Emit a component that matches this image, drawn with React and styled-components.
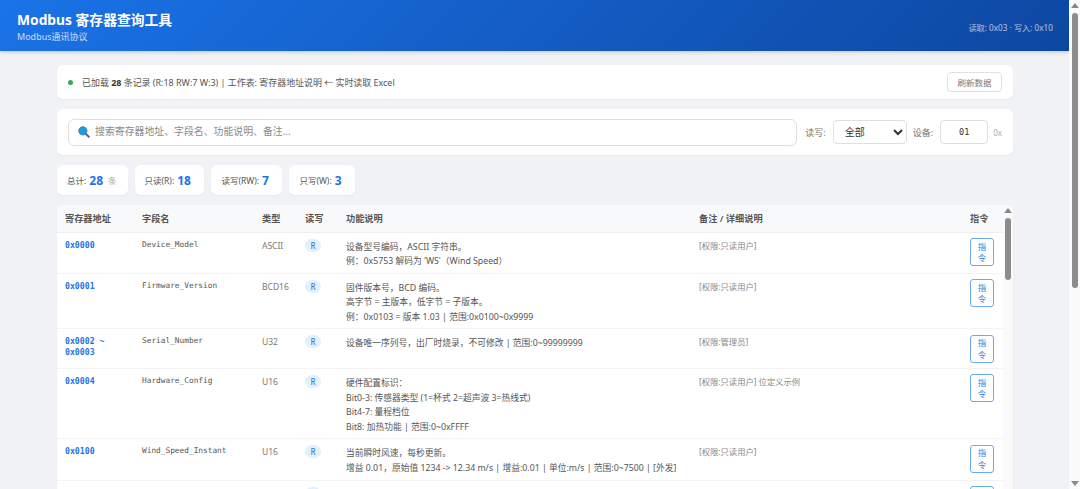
import React from 'react';
import styled, { createGlobalStyle } from 'styled-components';

const SANS = '"Noto Sans", "Noto Sans CJK SC", sans-serif';
const MONO = '"DejaVu Sans Mono", "Noto Sans CJK SC", monospace';

const ROWS = [
  {
    addr: ['0x0000'],
    field: 'Device_Model',
    type: 'ASCII',
    desc: ['设备型号编码，ASCII 字符串。', "例：0x5753 解码为 'WS'（Wind Speed）"],
    note: '[权限:只读用户]',
  },
  {
    addr: ['0x0001'],
    field: 'Firmware_Version',
    type: 'BCD16',
    desc: ['固件版本号，BCD 编码。', '高字节 = 主版本，低字节 = 子版本。', '例：0x0103 = 版本 1.03 | 范围:0x0100~0x9999'],
    note: '[权限:只读用户]',
  },
  {
    addr: ['0x0002 ~', '0x0003'],
    field: 'Serial_Number',
    type: 'U32',
    desc: ['设备唯一序列号，出厂时烧录，不可修改 | 范围:0~99999999'],
    note: '[权限:管理员]',
  },
  {
    addr: ['0x0004'],
    field: 'Hardware_Config',
    type: 'U16',
    desc: ['硬件配置标识：', 'Bit0-3: 传感器类型 (1=杯式 2=超声波 3=热线式)', 'Bit4-7: 量程档位', 'Bit8: 加热功能 | 范围:0~0xFFFF'],
    note: '[权限:只读用户] 位定义示例',
  },
  {
    addr: ['0x0100'],
    field: 'Wind_Speed_Instant',
    type: 'U16',
    desc: ['当前瞬时风速，每秒更新。', '增益 0.01，原始值 1234 -> 12.34 m/s | 增益:0.01 | 单位:m/s | 范围:0~7500 | [外发]'],
    note: '[权限:只读用户]',
  },
  {
    addr: ['0x0101'],
    field: 'Wind_Speed_Average',
    type: 'U16',
    desc: ['平均风速，按设定周期统计。'],
    note: '[权限:只读用户]',
  },
];

const GlobalStyle = createGlobalStyle`
  html,
  body {
    margin: 0;
    height: 100%;
    overflow: hidden;
  }

  body {
    background: #f0f2f5;
    font-family: ${SANS};
    color: #333333;
  }
`;

const Window = styled.div`
  height: 100vh;
  display: flex;
  overflow: hidden;
`;

const Page = styled.div`
  flex: 1;
  min-width: 0;
  overflow: hidden;
`;

const Scrollbar = styled.div`
  flex: none;
  width: ${(p) => p.$width}px;
  box-sizing: border-box;
  display: flex;
  flex-direction: column;
  align-items: center;
  background: #fafafa;
`;

const ArrowUp = styled.span`
  flex: none;
  margin: 3px 0 5px;
  width: 0;
  height: 0;
  border-left: 4px solid transparent;
  border-right: 4px solid transparent;
  border-bottom: 5px solid #8a8a8a;
`;

const ArrowDown = styled.span`
  flex: none;
  margin-top: auto;
  margin-bottom: 3px;
  width: 0;
  height: 0;
  border-left: 4px solid transparent;
  border-right: 4px solid transparent;
  border-top: 5px solid #8a8a8a;
`;

const Thumb = styled.span`
  flex: none;
  width: 6px;
  height: ${(p) => p.$height}px;
  border-radius: 3px;
  background: #8c8c8c;
`;

const Header = styled.header`
  height: 51px;
  box-sizing: border-box;
  padding: 2px 16px 0 17px;
  display: flex;
  justify-content: space-between;
  align-items: center;
  background: linear-gradient(135deg, #1a73e8, #0d47a1);
  box-shadow: 0 1px 4px rgba(0, 0, 0, 0.2);
  color: #ffffff;
`;

const Title = styled.h1`
  margin: 0;
  font-size: 13.8px;
  line-height: 19px;
  font-weight: 700;
`;

const Subtitle = styled.div`
  margin-top: 1px;
  font-size: 9px;
  line-height: 13px;
  opacity: 0.75;
`;

const HeaderInfo = styled.div`
  font-size: 8.2px;
  opacity: 0.65;
`;

const Main = styled.main`
  padding: 14px 56px 18px 57px;
  display: flex;
  flex-direction: column;
`;

const Card = styled.section`
  background: #ffffff;
  border-radius: 6px;
  box-shadow: 0 1px 2px rgba(0, 0, 0, 0.04);
`;

const StatusBar = styled(Card)`
  height: 34px;
  box-sizing: border-box;
  padding: 0 11px;
  display: flex;
  align-items: center;
  gap: 9px;
  font-size: 8.95px;
  color: #555555;
`;

const Dot = styled.span`
  width: 5px;
  height: 5px;
  border-radius: 50%;
  background: #34a853;
`;

const StatusText = styled.span`
  flex: 1;

  b {
    color: #333333;
  }
`;

const RefreshButton = styled.button`
  width: 55px;
  height: 20px;
  padding: 0;
  background: #ffffff;
  border: 1px solid #e0e0e0;
  border-radius: 4px;
  font-family: ${SANS};
  font-size: 8.5px;
  color: #777777;
`;

const SearchBar = styled(Card)`
  margin-top: 10px;
  height: 46px;
  box-sizing: border-box;
  padding: 0 11px;
  display: flex;
  align-items: center;
`;

const SearchBox = styled.label`
  flex: 1;
  height: 27px;
  box-sizing: border-box;
  padding: 0 9px;
  display: flex;
  align-items: center;
  gap: 5px;
  border: 1px solid #e0e0e0;
  border-radius: 6px;
`;

const SearchIcon = styled.svg`
  width: 12px;
  height: 12px;
  flex: none;
`;

const SearchInput = styled.input`
  flex: 1;
  min-width: 0;
  border: 0;
  outline: 0;
  padding: 0 0 2px;
  font-family: ${SANS};
  font-size: 9.9px;

  &::placeholder {
    color: #8a8a8a;
    opacity: 1;
  }
`;

const FilterLabel = styled.span`
  font-size: 9px;
  color: #777777;
  margin: 0 7px 0 ${(p) => p.$gap}px;
`;

const FilterSelect = styled.select`
  width: 74px;
  height: 24px;
  box-sizing: border-box;
  padding: 0 0 0 7px;
  background: #ffffff;
  border: 1px solid #e0e0e0;
  border-radius: 4px;
  font-family: ${SANS};
  font-size: 10px;
  color: #333333;
`;

const DeviceInput = styled.input`
  width: 48px;
  height: 24px;
  box-sizing: border-box;
  padding: 0;
  text-align: center;
  background: #ffffff;
  border: 1px solid #e0e0e0;
  border-radius: 4px;
  font-family: ${MONO};
  font-size: 8.5px;
  color: #333333;
`;

const HexHint = styled.span`
  margin-left: 5px;
  font-size: 8px;
  color: #aaaaaa;
`;

const Stats = styled.div`
  margin-top: 10px;
  display: flex;
  gap: 7px;
`;

const Stat = styled(Card)`
  height: 30px;
  box-sizing: border-box;
  padding: 0 ${(p) => p.$end}px 0 10px;
  display: flex;
  align-items: center;
  gap: 3px;
  font-size: 8.5px;
  color: #555555;
`;

const StatValue = styled.b`
  font-size: 12px;
  color: #1a73e8;
`;

const StatUnit = styled.span`
  margin-left: 2px;
  color: #aaaaaa;
`;

const TableCard = styled(Card)`
  margin-top: 10px;
  height: 600px;
  display: flex;
  overflow: hidden;
`;

const Table = styled.table`
  flex: 1;
  align-self: flex-start;
  min-width: 0;
  border-collapse: collapse;
  table-layout: fixed;
`;

const HeadCell = styled.th`
  width: ${(p) => p.$width}px;
  height: 27px;
  padding: 0 8px;
  box-sizing: border-box;
  text-align: left;
  background: #f8f9fa;
  border-bottom: 1px solid #eeeeee;
  font-size: 9.2px;
  font-weight: 600;
  color: #555555;
`;

const Row = styled.tr`
  border-bottom: 1px solid #f3f3f3;
`;

const Cell = styled.td`
  padding: 5.5px 8px 5px;
  box-sizing: border-box;
  vertical-align: top;
  font-size: 8.5px;
  color: #777777;
`;

const TypeCell = styled(Cell)`
  padding-top: 7px;
`;

const BadgeCell = styled(Cell)`
  padding-top: 6px;
`;

const AddrCell = styled(Cell)`
  padding-top: 7px;
  font-family: ${MONO};
  font-size: 8.2px;
  font-weight: 700;
  line-height: 10.7px;
  color: #1a73e8;
`;

const FieldCell = styled(Cell)`
  padding-top: 6px;
  font-family: ${MONO};
  font-size: 7.8px;
  line-height: 12px;
  color: #555555;
`;

const Line = styled.div`
  line-height: 14.6px;
`;

const DescCell = styled(Cell)`
  padding-top: 7px;
  padding-bottom: 4px;
  font-size: 8.75px;
  color: #555555;
`;

const NoteCell = styled(Cell)`
  padding-top: 6px;
  font-size: 8.3px;
  line-height: 13px;
  color: #888888;
`;

const Badge = styled.span`
  display: inline-flex;
  justify-content: center;
  align-items: center;
  width: 16px;
  height: 13px;
  border-radius: 7px;
  background: #e3f0fd;
  color: #3b82e0;
  font-size: 8px;
  font-weight: 500;
`;

const CommandButton = styled.button`
  display: block;
  width: 24px;
  height: 28px;
  padding: 0 4px;
  background: #ffffff;
  border: 1px solid #6ea8f5;
  border-radius: 3px;
  font-family: ${SANS};
  font-size: 8.5px;
  line-height: 11.5px;
  color: #3b82e0;
`;

function App() {
  return (
    <Window>
      <GlobalStyle />

      <Page>
        <Header>
          <div>
            <Title>Modbus 寄存器查询工具</Title>
            <Subtitle>Modbus通讯协议</Subtitle>
          </div>
          <HeaderInfo>读取: 0x03 · 写入: 0x10</HeaderInfo>
        </Header>

        <Main>
          <StatusBar>
            <Dot />
            <StatusText>
              已加载 <b>28</b> 条记录 (R:18 RW:7 W:3) | 工作表: 寄存器地址说明 ← 实时读取 Excel
            </StatusText>
            <RefreshButton>刷新数据</RefreshButton>
          </StatusBar>

          <SearchBar>
            <SearchBox>
              <SearchIcon viewBox="0 0 16 16">
                <path d="M10 10l4.5 4.5" stroke="#6b4fa0" strokeWidth="2.6" strokeLinecap="round" />
                <circle cx="6.5" cy="6.5" r="5.5" fill="#1e9bdc" stroke="#2a6fb0" strokeWidth="1" />
              </SearchIcon>
              <SearchInput placeholder="搜索寄存器地址、字段名、功能说明、备注..." />
            </SearchBox>
            <FilterLabel $gap={8.5}>读写:</FilterLabel>
            <FilterSelect defaultValue="all">
              <option value="all">全部</option>
            </FilterSelect>
            <FilterLabel $gap={6}>设备:</FilterLabel>
            <DeviceInput defaultValue="01" />
            <HexHint>0x</HexHint>
          </SearchBar>

          <Stats>
            <Stat $end={11}>
              总计: <StatValue>28</StatValue> <StatUnit>条</StatUnit>
            </Stat>
            <Stat $end={13.5}>
              只读(R): <StatValue>18</StatValue>
            </Stat>
            <Stat $end={13.5}>
              读写(RW): <StatValue>7</StatValue>
            </Stat>
            <Stat $end={13.5}>
              只写(W): <StatValue>3</StatValue>
            </Stat>
          </Stats>

          <TableCard>
            <Table>
              <thead>
                <tr>
                  <HeadCell $width={77}>寄存器地址</HeadCell>
                  <HeadCell $width={120}>字段名</HeadCell>
                  <HeadCell $width={43}>类型</HeadCell>
                  <HeadCell $width={41}>读写</HeadCell>
                  <HeadCell $width={353}>功能说明</HeadCell>
                  <HeadCell $width={271}>备注 / 详细说明</HeadCell>
                  <HeadCell>指令</HeadCell>
                </tr>
              </thead>
              <tbody>
                {ROWS.map((row) => (
                  <Row key={row.field}>
                    <AddrCell>
                      {row.addr.map((part) => (
                        <div key={part}>{part}</div>
                      ))}
                    </AddrCell>
                    <FieldCell>{row.field}</FieldCell>
                    <TypeCell>{row.type}</TypeCell>
                    <BadgeCell>
                      <Badge>R</Badge>
                    </BadgeCell>
                    <DescCell>
                      {row.desc.map((line) => (
                        <Line key={line}>{line}</Line>
                      ))}
                    </DescCell>
                    <NoteCell>{row.note}</NoteCell>
                    <Cell>
                      <CommandButton>指令</CommandButton>
                    </Cell>
                  </Row>
                ))}
              </tbody>
            </Table>

            <Scrollbar $width={10}>
              <ArrowUp />
              <Thumb $height={62} />
            </Scrollbar>
          </TableCard>
        </Main>
      </Page>

      <Scrollbar $width={11}>
        <ArrowUp />
        <Thumb $height={275} />
        <ArrowDown />
      </Scrollbar>
    </Window>
  );
}

export default App;
